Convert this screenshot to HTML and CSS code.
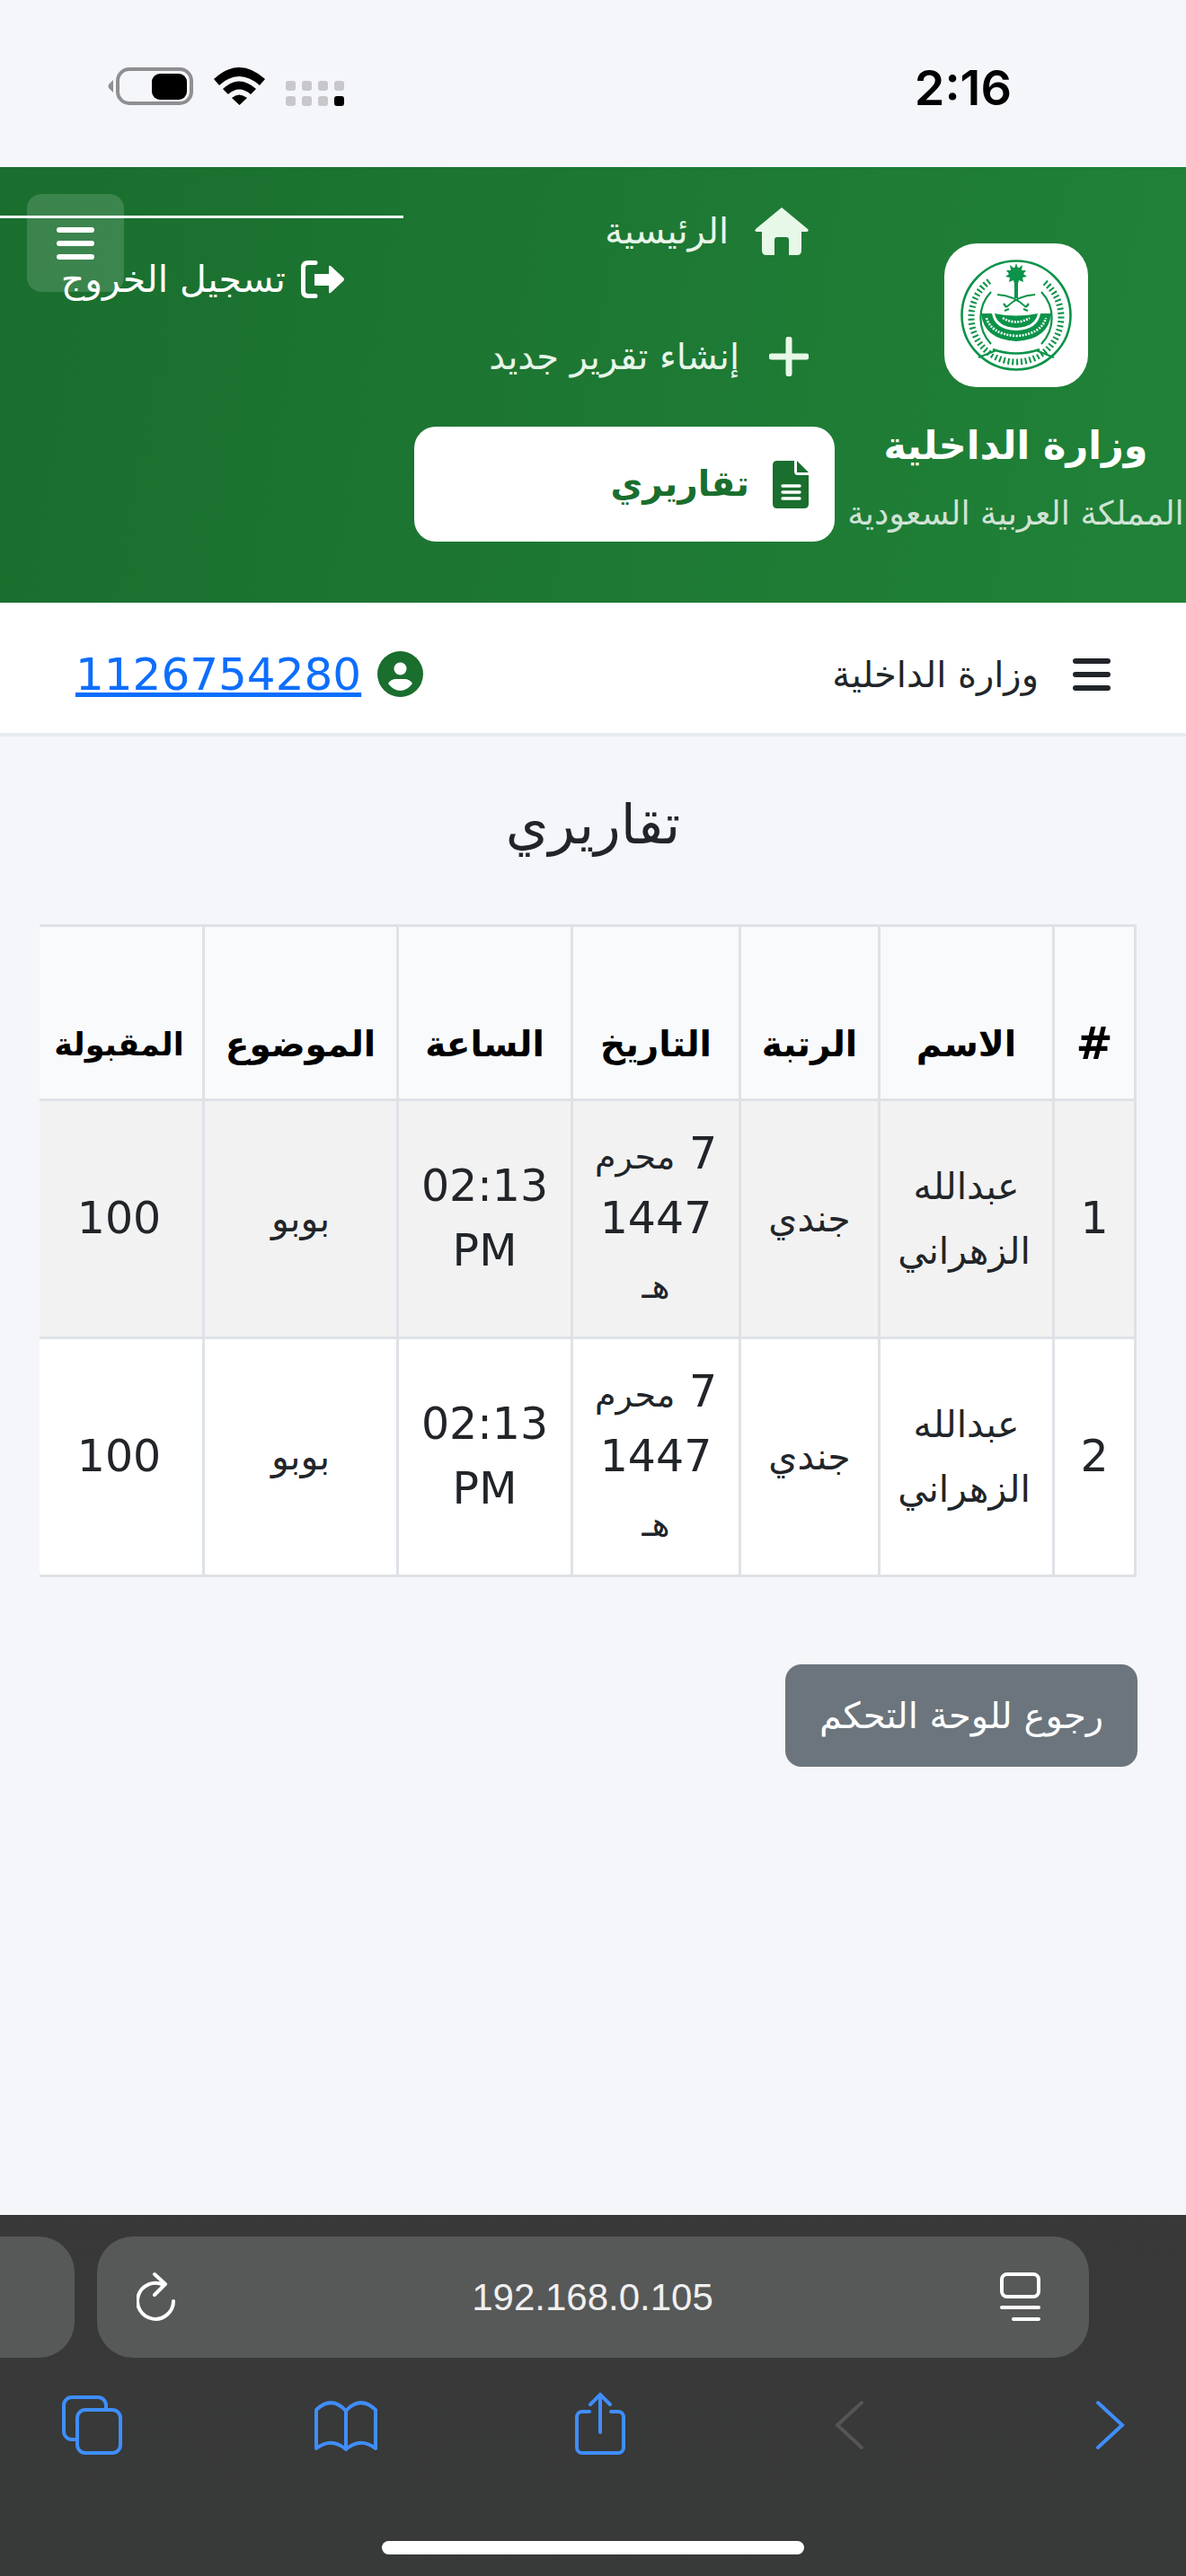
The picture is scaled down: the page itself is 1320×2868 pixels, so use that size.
FILE: index.html
```html
<!DOCTYPE html>
<html lang="ar" dir="rtl">
<head>
  <meta charset="UTF-8">
  <title>تقاريري</title>
  <link rel="stylesheet" href="styles.css">
</head>
<body>

  <div class="status-bar">
    <div class="status-icons">
      <svg width="95" height="42" viewBox="0 0 95 42">
        <path d="M6 14 L1 19 Q0 21 1 23 L6 28 Z" fill="#8e8e93"/>
        <rect x="11" y="2" width="82" height="38" rx="13" fill="none" stroke="#8e8e93" stroke-width="4"/>
        <rect x="49" y="7" width="39" height="29" rx="9" fill="#000"/>
      </svg>
      <svg width="57" height="42" viewBox="0 0 57 42">
        <path d="M0 13 Q28 -13 57 13 L51 20 Q28 0 6 20 Z" fill="#000"/>
        <path d="M10 24 Q28 7 47 24 L41 30 Q28 19 16 30 Z" fill="#000"/>
        <path d="M20 34 Q28 27 37 34 L28.5 42 Z" fill="#000"/>
      </svg>
      <div class="signal">
        <i></i><i></i><i></i><i></i>
        <i></i><i></i><i></i><i class="on"></i>
      </div>
    </div>
    <div class="time">2:16</div>
  </div>

  <header class="site-header">
    <button class="menu-btn"><span></span><span></span><span></span></button>

    <div class="brand">
      <div class="logo">
        <svg width="126" height="126" viewBox="-63 -63 126 126">
          <circle r="60.5" fill="none" stroke="#0b9349" stroke-width="2.6"/>
          <!-- wreath -->
          <path d="M-30 -38 A50 50 0 1 0 30 -38" fill="none" stroke="#0b9349" stroke-width="7" stroke-dasharray="2 2.8"/>
          <path d="M-28 -26 A42 42 0 0 0 -28 32 M28 -26 A42 42 0 0 1 28 32" fill="none" stroke="#0b9349" stroke-width="2.2"/>
          <path d="M-26 40 Q0 48 26 40" fill="none" stroke="#fff" stroke-width="5"/>
          <path d="M-26 38 Q0 47 26 38 M-42 47 L-22 39 M42 47 L22 39" fill="none" stroke="#0b9349" stroke-width="2.4"/>
          <!-- palm -->
          <g fill="#0b9349">
            <circle cy="-47" r="6.5"/>
            <path d="M0 -58 L2 -52 L7 -56 L6 -50 L11 -50 L8 -46 L12 -43 L7 -42 L8 -37 L3 -39 L2 -35 H-2 L-3 -39 L-8 -37 L-7 -42 L-12 -43 L-8 -46 L-11 -50 L-6 -50 L-7 -56 L-2 -52 Z"/>
            <rect x="-2" y="-37" width="4" height="18"/>
            <path d="M-39 -2 H-27 Q-24 16 0 17 Q24 16 27 -2 H39 Q36 27 0 29 Q-36 27 -39 -2 Z"/>
            <path d="M-24 -2 Q0 3 24 -2 Q21 13 0 14 Q-21 13 -24 -2 Z"/>
          </g>
          <path d="M-33 3 Q-28 21 0 23 Q28 21 33 3" fill="none" stroke="#fff" stroke-width="2.6" stroke-dasharray="2 1.4"/>
          <path d="M-15 3 Q0 12 15 3" fill="none" stroke="#fff" stroke-width="2.6" stroke-dasharray="2 1.4"/>
          <!-- swords -->
          <path d="M-21 -23 Q-2 -22 11 -9 M21 -23 Q2 -22 -11 -9" fill="none" stroke="#0b9349" stroke-width="1.8"/>
          <path d="M11 -9 L14 -13 M8 -7 L13 -5 M-11 -9 L-14 -13 M-8 -7 L-13 -5" fill="none" stroke="#0b9349" stroke-width="2.2"/>
        </svg>
      </div>
      <div class="brand-title">وزارة الداخلية</div>
      <div class="brand-sub">المملكة العربية السعودية</div>
    </div>

    <nav class="side-nav">
      <a class="nav-link" href="#">
        <svg width="60" height="53" viewBox="0 0 60 53"><path d="M30 0 L59 24 Q61 27 57 27 H52 V48 Q52 53 47 53 H38 V36 Q38 33 35 33 H25 Q22 33 22 36 V53 H13 Q8 53 8 48 V27 H3 Q-1 27 1 24 Z" fill="#e8f8e8"/></svg>
        <span>الرئيسية</span>
      </a>
      <a class="nav-link plus" href="#">
        <svg width="44" height="44" viewBox="0 0 44 44"><path d="M22 3 V41 M3 22 H41" stroke="#e8f8e8" stroke-width="7" stroke-linecap="round"/></svg>
        <span>إنشاء تقرير جديد</span>
      </a>
      <a class="nav-link active" href="#">
        <svg width="40" height="53" viewBox="0 0 40 53">
          <path d="M5 0 H24 V12 Q24 16 28 16 H40 V48 Q40 53 35 53 H5 Q0 53 0 48 V5 Q0 0 5 0 Z" fill="#1a6e2e"/>
          <path d="M27 0 L40 13 H27 Z" fill="#1a6e2e"/>
          <path d="M11 28 H30 M11 35 H30 M11 42 H30" stroke="#fff" stroke-width="3.4" stroke-linecap="round"/>
        </svg>
        <span>تقاريري</span>
      </a>
    </nav>

    <div class="logout">
      <a class="logout-link" href="#">
        <svg width="48" height="42" viewBox="0 0 48 42">
          <path d="M16 2.5 H8 Q2.5 2.5 2.5 8 V34 Q2.5 39.5 8 39.5 H16" fill="none" stroke="#fff" stroke-width="5" stroke-linecap="round"/>
          <path d="M15 15 H31 V7 Q31 5 33 6 L47 19 Q49 21 47 23 L33 36 Q31 37 31 35 V28 H15 Z" fill="#fff"/>
        </svg>
        <span>تسجيل الخروج</span>
      </a>
    </div>
  </header>

  <div class="top-bar">
    <div class="top-right">
      <div class="bars"><span></span><span></span><span></span></div>
      <span class="top-title">وزارة الداخلية</span>
    </div>
    <div class="top-user">
      <svg width="51" height="51" viewBox="0 0 51 51">
        <circle cx="25.5" cy="25.5" r="25.5" fill="#1a6e2e"/>
        <circle cx="25.5" cy="19.5" r="7" fill="#fff"/>
        <path d="M12 36 Q15 31 21 31 H30 Q36 31 39 36 Q33 44 25.5 44 Q18 44 12 36 Z" fill="#fff"/>
      </svg>
      <a class="user-link" href="#">1126754280</a>
    </div>
  </div>

  <main class="content">
    <h2 class="page-title">تقاريري</h2>

    <div class="table-wrap">
      <table class="reports">
        <colgroup>
          <col class="c-num"><col class="c-name"><col class="c-rank"><col class="c-date"><col class="c-time"><col class="c-subject"><col class="c-score">
        </colgroup>
        <thead>
          <tr>
            <th>#</th>
            <th class="ar">الاسم</th>
            <th class="ar">الرتبة</th>
            <th class="ar">التاريخ</th>
            <th class="ar">الساعة</th>
            <th class="ar">الموضوع</th>
            <th class="ar th-score">المقبولة</th>
          </tr>
        </thead>
        <tbody>
          <tr class="striped">
            <td>1</td>
            <td class="ar">عبدالله الزهراني</td>
            <td class="ar">جندي</td>
            <td>7 <span class="ar">محرم</span> 1447 <span class="ar">هـ</span></td>
            <td>02:13 PM</td>
            <td class="ar">بوبو</td>
            <td>100</td>
          </tr>
          <tr>
            <td>2</td>
            <td class="ar">عبدالله الزهراني</td>
            <td class="ar">جندي</td>
            <td>7 <span class="ar">محرم</span> 1447 <span class="ar">هـ</span></td>
            <td>02:13 PM</td>
            <td class="ar">بوبو</td>
            <td>100</td>
          </tr>
        </tbody>
      </table>
    </div>

    <a class="back-btn" href="#">رجوع للوحة التحكم</a>
  </main>

  <div class="browser-bar">
    <div class="address-row">
      <div class="prev-tab"></div>
      <div class="address">
        <svg width="48" height="58" viewBox="0 0 48 58">
          <path d="M41 33 A20 20 0 1 1 30 15" fill="none" stroke="#fff" stroke-width="4" stroke-linecap="round"/>
          <path d="M20 3 L32 14 L20 26" fill="none" stroke="#fff" stroke-width="4" stroke-linecap="round" stroke-linejoin="round"/>
        </svg>
        <span class="url">192.168.0.105</span>
        <svg width="46" height="56" viewBox="0 0 46 56">
          <rect x="2" y="2" width="41" height="25" rx="6" fill="none" stroke="#fff" stroke-width="4"/>
          <path d="M2 39 H43 M15 52 H43" stroke="#fff" stroke-width="4" stroke-linecap="round"/>
        </svg>
      </div>
    </div>
    <div class="tool-row">
      <svg viewBox="0 0 80 72"><path d="M24 53 H18 A9 9 0 0 1 9 44 V15 A9 9 0 0 1 18 6 H47 A9 9 0 0 1 56 15 V20"/><rect x="24" y="20" width="48" height="48" rx="9"/></svg>
      <svg viewBox="0 0 80 72"><path d="M40 21 Q24 4 7 20 V63 Q24 50 40 64 Q56 50 73 63 V20 Q56 4 40 21 V64" stroke-linejoin="round"/></svg>
      <svg viewBox="0 0 80 72"><path d="M28 22 H20 A6 6 0 0 0 14 28 V62 A6 6 0 0 0 20 68 H60 A6 6 0 0 0 66 62 V28 A6 6 0 0 0 60 22 H52"/><path d="M40 45 V3 M29 14 L40 3 L51 14"/></svg>
      <svg viewBox="0 0 80 72"><path class="off" d="M48 12 L21 37 L48 62"/></svg>
      <svg viewBox="0 0 80 72"><path d="M28 12 L55 37 L28 62"/></svg>
    </div>
    <div class="home-indicator"></div>
  </div>

</body>
</html>
```

FILE: styles.css
```css
* {
  box-sizing: border-box;
}
body {
  margin: 0;
  height: 2868px;
  overflow: hidden;
  display: flex;
  flex-direction: column;
  background: #f5f6fa;
  color: #212529;
  font-family: "DejaVu Sans", sans-serif;
  font-size: 49px;
  line-height: 72px;
}
a {
  text-decoration: none;
}

/* status bar */
.status-bar {
  direction: ltr;
  height: 186px;
  flex: none;
  display: flex;
  justify-content: space-between;
  padding: 75px 194px 0 120px;
}
.status-icons {
  display: flex;
  gap: 23px;
  height: 42px;
}
.signal {
  display: grid;
  grid-template-columns: repeat(4, 11px);
  grid-template-rows: repeat(2, 11px);
  gap: 6px 7px;
  margin-top: 15px;
}
.signal i {
  background: #c7c7cc;
  border-radius: 3px;
}
.signal i.on {
  background: #000;
}
.time {
  font-family: Inter, sans-serif;
  font-weight: 600;
  font-size: 54px;
  line-height: 46px;
  color: #000;
}

/* green header */
.site-header {
  position: relative;
  flex: none;
  height: 485px;
  display: flex;
  gap: 12px;
  overflow: hidden;
  background: linear-gradient(100deg, #1a6e2e, #208238);
}
.menu-btn {
  position: absolute;
  top: 30px;
  left: 30px;
  width: 108px;
  height: 109px;
  padding: 0;
  border: none;
  border-radius: 16px;
  background: rgba(255,255,255,0.15);
  display: flex;
  flex-direction: column;
  align-items: center;
  justify-content: center;
  gap: 9px;
}
.menu-btn span {
  width: 42px;
  height: 6px;
  border-radius: 3px;
  background: #fff;
}
.brand {
  width: 379px;
  flex: none;
  padding-top: 85px;
  display: flex;
  flex-direction: column;
  align-items: center;
  color: #fff;
  white-space: nowrap;
}
.logo {
  width: 160px;
  height: 160px;
  border-radius: 36px;
  background: #fff;
  display: flex;
  align-items: center;
  justify-content: center;
}
.brand-title {
  margin-top: 27px;
  font-size: 43px;
  font-weight: bold;
  line-height: 76px;
}
.brand-sub {
  font-size: 36.5px;
  line-height: 76px;
  color: rgba(255,255,255,0.8);
}
.side-nav {
  width: 468px;
  flex: none;
  padding-top: 7px;
  display: flex;
  flex-direction: column;
  gap: 12px;
}
.nav-link {
  height: 128px;
  padding-right: 29px;
  display: flex;
  align-items: center;
  gap: 29px;
  color: #e8f5e9;
  font-size: 40px;
}
.nav-link.plus {
  gap: 33px;
}
.nav-link.active {
  margin-top: 2px;
  gap: 26px;
  background: #fff;
  border-radius: 24px;
  color: #1a6e2e;
  font-weight: bold;
  font-size: 39px;
}
.logout {
  width: 449px;
  flex: none;
  padding-top: 54px;
}
.logout-link {
  border-top: 3px solid #fff;
  padding: 32px 66px 0 0;
  display: flex;
  align-items: center;
  gap: 17px;
  color: #fff;
  font-size: 41px;
}

/* white bar */
.top-bar {
  flex: none;
  height: 149px;
  padding: 14px 84px 0;
  display: flex;
  align-items: center;
  justify-content: space-between;
  background: #fff;
  border-bottom: 4px solid #e9ecef;
}
.top-right {
  display: flex;
  align-items: center;
  gap: 38px;
}
.bars {
  width: 42px;
  display: flex;
  flex-direction: column;
  gap: 9px;
}
.bars span {
  height: 6px;
  border-radius: 3px;
  background: #212529;
}
.top-title {
  font-size: 40px;
}
.top-user {
  display: flex;
  align-items: center;
  gap: 18px;
}
.user-link {
  color: #0d6efd;
  font-size: 50px;
  text-decoration: underline;
}

/* page content */
.content {
  flex: 1;
  display: flex;
  flex-direction: column;
}
.page-title {
  margin: 43px 0 0;
  height: 166px;
  text-align: center;
  font-size: 61px;
  font-weight: normal;
  line-height: 110px;
}
.table-wrap {
  margin: 0 55px 0 44px;
  overflow: hidden;
}
.reports {
  table-layout: fixed;
  width: 1225px;
  border-collapse: collapse;
  text-align: center;
}
.c-num { width: 91px; }
.c-name { width: 194px; }
.c-rank { width: 155px; }
.c-date { width: 187px; }
.c-time { width: 194px; }
.c-subject { width: 216px; }
.c-score { width: 188px; }
.reports th,
.reports td {
  padding: 24px 12px;
  border: 3px solid #dee2e6;
}
.reports th {
  height: 194px;
  vertical-align: bottom;
  background: #f9fafc;
  color: #000;
}
.reports td {
  padding-top: 23px;
  padding-bottom: 23px;
  background: #fff;
}
.reports .striped td {
  background: #f2f2f2;
}
.reports th.ar {
  font-size: 39px;
}
.reports th.th-score {
  font-size: 35px;
}
.reports td.ar {
  font-size: 41px;
  padding-left: 24px;
  padding-right: 24px;
}
.reports span.ar {
  font-size: 38px;
  line-height: 1;
}
.back-btn {
  align-self: flex-start;
  margin: 97px 54px 0 0;
  width: 392px;
  height: 114px;
  display: flex;
  align-items: center;
  justify-content: center;
  border-radius: 18px;
  background: #6c757d;
  color: #fff;
  font-size: 40px;
}

/* safari toolbar */
.browser-bar {
  direction: ltr;
  flex: none;
  height: 402px;
  background: linear-gradient(#383838, #383a39);
}
.address-row {
  display: flex;
  gap: 25px;
  padding-top: 24px;
}
.prev-tab {
  width: 83px;
  height: 135px;
  background: #575958;
  border-radius: 0 40px 40px 0;
}
.address {
  width: 1104px;
  height: 135px;
  padding: 0 53px 0 44px;
  display: flex;
  align-items: center;
  justify-content: space-between;
  background: #575958;
  border-radius: 40px;
}
.url {
  font-family: "Liberation Sans", sans-serif;
  font-size: 42px;
  color: #f0f0f0;
  margin-left: 6px;
}
.tool-row {
  display: grid;
  grid-template-columns: repeat(5, 283px);
  justify-items: center;
  margin: 38px 0 0 -40px;
}
.tool-row svg {
  width: 80px;
  height: 72px;
  fill: none;
  stroke: #3f8efc;
  stroke-width: 4;
  stroke-linecap: round;
}
.tool-row .off {
  stroke: #555;
}
.home-indicator {
  width: 470px;
  height: 15px;
  margin: 94px auto 0;
  border-radius: 8px;
  background: #fff;
}
```
